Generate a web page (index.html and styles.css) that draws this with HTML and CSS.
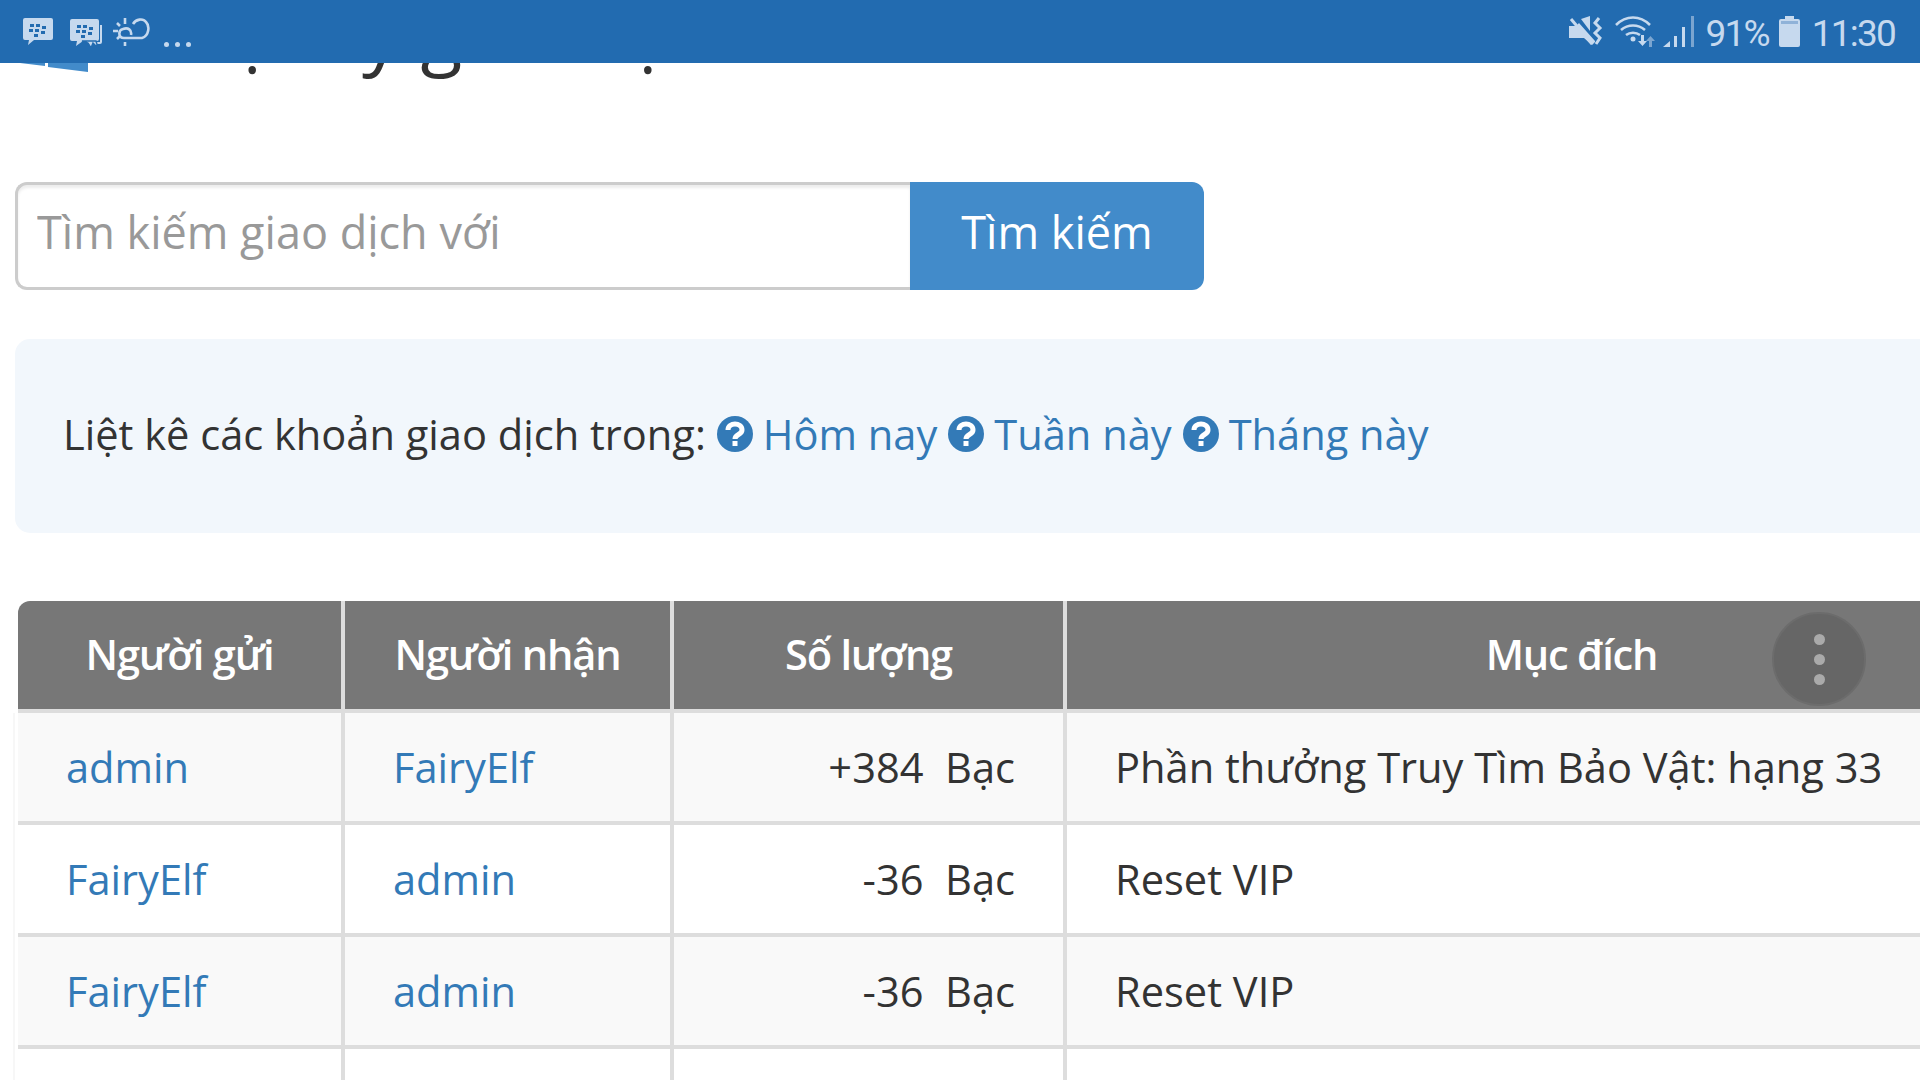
FILE: index.html
```html
<!DOCTYPE html>
<html lang="vi">
<head>
    <meta charset="UTF-8">
    <meta name="viewport" content="width=device-width, initial-scale=1.0">
    <title>Nhật ký giao dịch</title>
    <link rel="stylesheet" href="styles.css">
</head>
<body>
    <header class="status-bar">
        <div class="status-left">
            <svg class="icon-bbm" width="30" height="27" viewBox="0 0 30 27">
                <path fill="#c6d9ee" d="M2 0h26a2 2 0 0 1 2 2v18a2 2 0 0 1-2 2H11l-6 5 1-5H2a2 2 0 0 1-2-2V2a2 2 0 0 1 2-2z"/>
                <g fill="#226bb0"><rect x="7" y="6" width="4" height="3"/><rect x="13" y="6" width="4" height="3"/><rect x="6" y="11" width="4" height="3"/><rect x="12" y="11" width="4" height="3"/><rect x="19" y="8" width="4" height="3"/><rect x="18" y="13" width="4" height="3"/><rect x="11" y="16" width="4" height="3"/></g>
            </svg>
            <svg class="icon-bbm2" width="32" height="29" viewBox="0 0 32 29">
                <path fill="none" stroke="#c6d9ee" stroke-width="2" d="M31 6v17a1 1 0 0 1-1 1H19"/>
                <path fill="#c6d9ee" d="M2 0h25a2 2 0 0 1 2 2v18a2 2 0 0 1-2 2H13l-7 5 1-5H2a2 2 0 0 1-2-2V2a2 2 0 0 1 2-2z"/>
                <path fill="#c6d9ee" stroke="#226bb0" stroke-width="1.5" d="M12 22h14l2 7-5-5-2 5-3-5z"/>
                <g fill="#226bb0"><rect x="7" y="6" width="4" height="3"/><rect x="13" y="6" width="4" height="3"/><rect x="6" y="11" width="4" height="3"/><rect x="12" y="11" width="4" height="3"/><rect x="19" y="8" width="4" height="3"/><rect x="18" y="13" width="4" height="3"/><rect x="11" y="16" width="4" height="3"/></g>
            </svg>
            <svg class="icon-weather" width="37" height="28" viewBox="0 0 37 28">
                <g fill="none" stroke="#c6d9ee" stroke-width="2.6">
                    <path d="M20 6C23 1 30 0 33 4C37 8 36 18 29 20H11C5 20 5 12 10 11C15 9 19 12 18 17"/>
                    <path d="M12 0v6M0 13h5M4 5l3 3M4 21l3-3M12 24v4"/>
                </g>
            </svg>
            <span class="more-dots"><i></i><i></i><i></i></span>
        </div>
        <div class="status-right">
            <svg class="icon-mute" width="34" height="31" viewBox="0 0 34 31">
                <path fill="#c6d9ee" d="M0 10h7l3-3 16 18v1l-3 3-8-7H0z"/>
                <path fill="#c6d9ee" d="M12 3l9-3v15z"/>
                <path stroke="#c6d9ee" stroke-width="3" d="M2 3l21 25"/>
                <path fill="none" stroke="#c6d9ee" stroke-width="3" d="M30 2l-4 5 5 5-5 5 5 5-4 6"/>
            </svg>
            <svg class="icon-wifi" width="42" height="31" viewBox="0 0 42 31">
                <g fill="none" stroke="#c6d9ee" stroke-width="2.6">
                    <path d="M1 9c10-10 24-10 34 0"/>
                    <path d="M6 14c7-6 17-6 24 0"/>
                    <path d="M11 19c4-3 10-3 14 0"/>
                </g>
                <circle cx="18" cy="23" r="2.5" fill="#c6d9ee"/>
                <path fill="#c6d9ee" d="M26 19h3v6h3l-4.500 5-4.500-5h3z"/>
                <path fill="#7ba5d0" d="M37 31h-3v-6h-3l4.500-5 4.500 5h-3z"/>
            </svg>
            <svg class="icon-signal" width="32" height="31" viewBox="0 0 32 31">
                <path fill="#c6d9ee" d="M7 25v6H0z"/>
                <rect x="11" y="20" width="3" height="11" fill="#c6d9ee"/>
                <rect x="19" y="11" width="3" height="20" fill="#c6d9ee"/>
                <rect x="28" y="0" width="3" height="31" fill="#7ba5d0"/>
            </svg>
            <span class="status-text battery-level">91%</span>
            <svg class="icon-battery" width="21" height="31" viewBox="0 0 21 31">
                <path fill="#c6d9ee" d="M6 0h9v3h4a2 2 0 0 1 2 2v24a2 2 0 0 1-2 2H2a2 2 0 0 1-2-2V5a2 2 0 0 1 2-2h4z"/>
                <rect x="2" y="5" width="17" height="3" fill="#8fb2d8"/>
            </svg>
            <span class="status-text clock">11:30</span>
        </div>
    </header>

    <main class="content">
        <div class="page-head">
            <svg class="logo" width="68" height="80" viewBox="0 0 68 80">
                <path fill="#428bca" d="M0 0h25v74L0 71zM28 0h40v80l-40-5z"/>
            </svg>
            <h3 class="page-title">Nhật ký giao dịch</h3>
        </div>

        <form class="search-form">
            <input class="search-input" type="text" placeholder="Tìm kiếm giao dịch với">
            <button class="search-btn" type="button">Tìm kiếm</button>
        </form>

        <div class="filter-panel">
            <span>Liệt kê các khoản giao dịch trong:</span>
            <a href="#"><svg class="icon-help" width="36" height="36" viewBox="0 0 36 36"><circle cx="18" cy="18" r="18" fill="#337ab7"/><path fill="none" stroke="#fff" stroke-width="5" d="M11 14c0-8 14-8 14 0 0 5-7 4-7 9"/><rect x="15.500" y="25" width="5" height="5" fill="#fff"/></svg> Hôm nay</a>
            <a href="#"><svg class="icon-help" width="36" height="36" viewBox="0 0 36 36"><circle cx="18" cy="18" r="18" fill="#337ab7"/><path fill="none" stroke="#fff" stroke-width="5" d="M11 14c0-8 14-8 14 0 0 5-7 4-7 9"/><rect x="15.500" y="25" width="5" height="5" fill="#fff"/></svg> Tuần này</a>
            <a href="#"><svg class="icon-help" width="36" height="36" viewBox="0 0 36 36"><circle cx="18" cy="18" r="18" fill="#337ab7"/><path fill="none" stroke="#fff" stroke-width="5" d="M11 14c0-8 14-8 14 0 0 5-7 4-7 9"/><rect x="15.500" y="25" width="5" height="5" fill="#fff"/></svg> Tháng này</a>
        </div>

        <div class="table-wrap">
            <table class="log-table">
                <thead>
                    <tr>
                        <th class="col-from">Người gửi</th>
                        <th class="col-to">Người nhận</th>
                        <th class="col-amount">Số lượng</th>
                        <th class="col-reason">Mục đích</th>
                    </tr>
                </thead>
                <tbody>
                    <tr>
                        <td><a href="#">admin</a></td>
                        <td><a href="#">FairyElf</a></td>
                        <td class="amount">+384&nbsp; Bạc</td>
                        <td>Phần thưởng Truy Tìm Bảo Vật: hạng 33</td>
                    </tr>
                    <tr>
                        <td><a href="#">FairyElf</a></td>
                        <td><a href="#">admin</a></td>
                        <td class="amount">-36&nbsp; Bạc</td>
                        <td>Reset VIP</td>
                    </tr>
                    <tr>
                        <td><a href="#">FairyElf</a></td>
                        <td><a href="#">admin</a></td>
                        <td class="amount">-36&nbsp; Bạc</td>
                        <td>Reset VIP</td>
                    </tr>
                    <tr>
                        <td>&nbsp;</td>
                        <td>&nbsp;</td>
                        <td>&nbsp;</td>
                        <td>&nbsp;</td>
                    </tr>
                </tbody>
            </table>
            <div class="kebab"><i></i><i></i><i></i></div>
        </div>
    </main>
</body>
</html>
```

FILE: styles.css
```css
* {
    box-sizing: border-box;
}
html, body {
    height: 100%;
}
body {
    margin: 0;
    overflow: hidden;
    background-color: #fff;
    color: #333;
    font-family: "Open Sans", sans-serif;
    font-size: 41.6px;
    line-height: 60px;
}
a {
    color: #337ab7;
    text-decoration: none;
}

.status-bar {
    display: flex;
    justify-content: space-between;
    height: 63px;
    padding: 16px 25px 0 23px;
    background-color: #226bb0;
}
.status-left, .status-right {
    display: flex;
    align-items: flex-start;
}
.icon-bbm {
    margin-top: 2px;
}
.icon-bbm2 {
    margin: 3px 0 0 17px;
}
.icon-weather {
    margin: 2px 0 0 11px;
}
.more-dots {
    display: flex;
    gap: 6px;
    margin: 26px 0 0 14px;
}
.more-dots i {
    width: 5px;
    height: 5px;
    border-radius: 50%;
    background-color: #c6d9ee;
}
.icon-wifi {
    margin-left: 12px;
}
.icon-signal {
    margin-left: 6px;
}
.status-text {
    margin-top: 1px;
    color: #c6d9ee;
    font-family: Roboto, sans-serif;
    font-size: 37px;
    letter-spacing: -1.8px;
    line-height: 34px;
}
.battery-level {
    margin-left: 11px;
}
.icon-battery {
    margin-left: 10px;
}
.clock {
    margin-left: 12px;
}

.content {
    width: 2100px;
    padding-left: 15px;
}
.page-head {
    display: flex;
    align-items: flex-end;
    height: 119px;
    padding: 0 0 108px 5px;
    overflow: hidden;
}
.logo {
    flex: none;
    margin-bottom: 2px;
}
.page-title {
    flex: none;
    margin: 0 0 0 38px;
    font-size: 77px;
    font-weight: 400;
    line-height: 84px;
}

.search-form {
    display: flex;
    width: 1189px;
    height: 108px;
}
.search-input {
    flex: 1;
    min-width: 0;
    padding: 0 0 10px 19px;
    border: 3px solid #ccc;
    border-right: none;
    border-radius: 12px 0 0 12px;
    box-shadow: inset 0 3px 3px rgba(0, 0, 0, .075);
    font-family: inherit;
    font-size: 45px;
    color: #555;
}
.search-input::placeholder {
    color: #999;
    opacity: 1;
}
.search-btn {
    width: 294px;
    border: none;
    border-radius: 0 12px 12px 0;
    padding: 0 0 10px;
    background-color: #428bca;
    color: #fff;
    font-family: inherit;
    font-size: 45px;
}

.filter-panel {
    display: flex;
    align-items: center;
    gap: 11px;
    height: 194px;
    margin-top: 49px;
    padding: 0 48px 4px;
    border-radius: 15px;
    background-color: #f2f7fc;
}
.filter-panel a {
    display: flex;
    align-items: center;
    gap: 10px;
}
.icon-help {
    flex: none;
}

.table-wrap {
    position: relative;
    width: 2062px;
    margin-top: 68px;
}
.log-table {
    width: 100%;
    table-layout: fixed;
    border-collapse: separate;
    border-spacing: 0;
    margin-left: 3px;
}
.log-table th {
    height: 112px;
    padding: 0 0 2px;
    background-color: #777;
    border-right: 4px solid #ddd;
    border-bottom: 4px solid #ddd;
    color: #fff;
    font-weight: 600;
    letter-spacing: -1.2px;
    text-align: center;
}
.log-table th:first-child {
    border-top-left-radius: 12px;
}
.col-from {
    width: 327px;
}
.col-to {
    width: 329px;
}
.col-amount {
    width: 393px;
}
.log-table td {
    height: 112px;
    padding: 24px 48px;
    border-right: 4px solid #ddd;
    border-bottom: 4px solid #ddd;
    white-space: nowrap;
    background-color: #fff;
}
.log-table td:first-child {
    box-shadow: -3px 0 0 #fff, -5px 0 0 #f7f7f7;
}
.log-table tbody tr:nth-child(odd) td {
    background-color: #f9f9f9;
}
.log-table td.amount {
    text-align: right;
}

.kebab {
    position: absolute;
    top: 11px;
    left: 1757px;
    display: flex;
    flex-direction: column;
    align-items: center;
    justify-content: center;
    gap: 9px;
    width: 94px;
    height: 94px;
    border: 2px solid #6c6c6c;
    border-radius: 50%;
    background-color: #666;
}
.kebab i {
    width: 11px;
    height: 11px;
    border-radius: 50%;
    background-color: #aaa;
}
```
